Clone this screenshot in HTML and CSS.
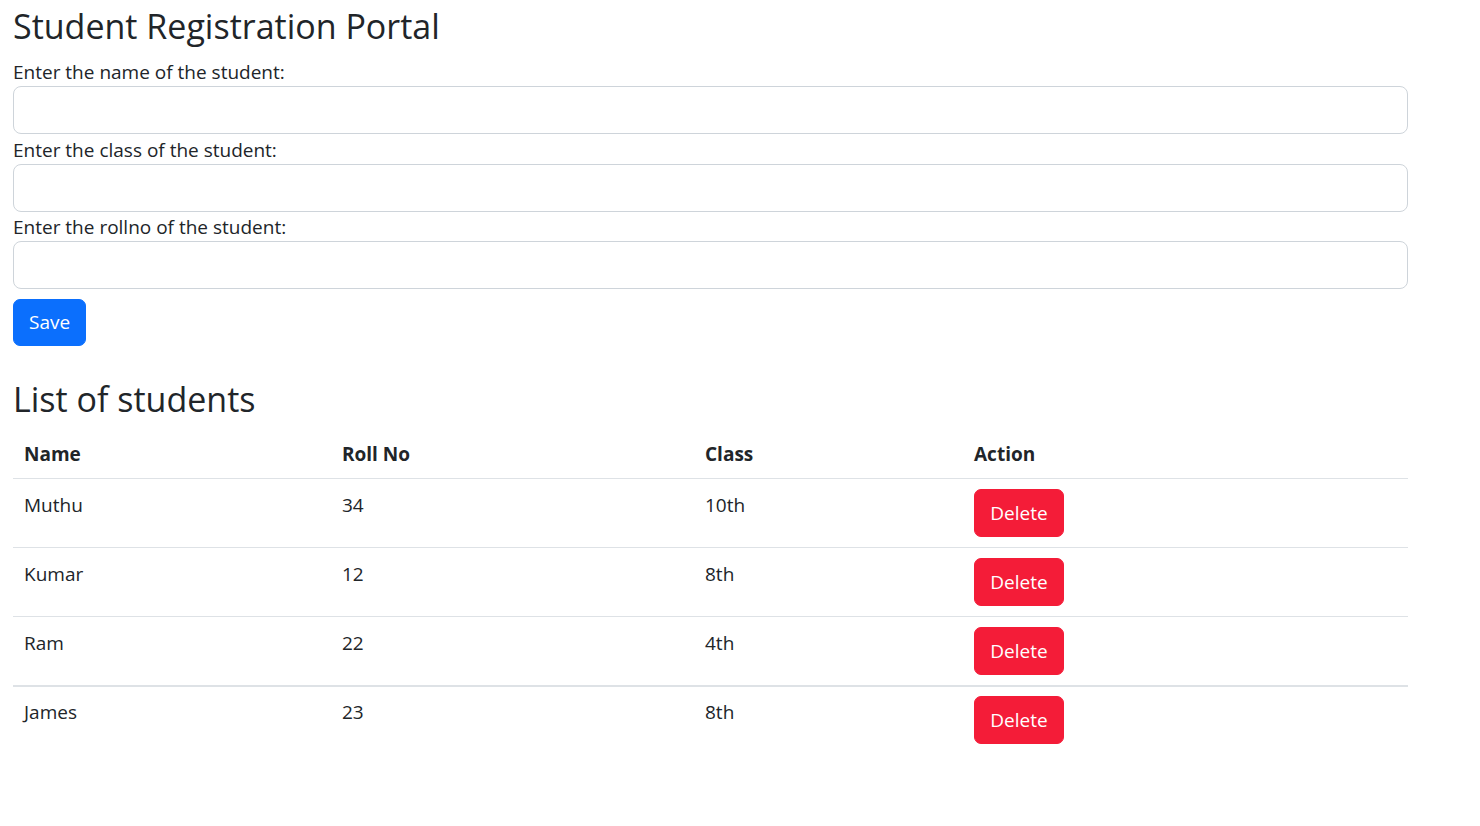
FILE: index.html
```html
<!DOCTYPE html>
<html lang="en">
<head>
<meta charset="utf-8">
<title>Student Registration Portal</title>
<link rel="stylesheet" href="styles.css">
</head>
<body>
<div class="page">
  <h1 class="title">Student Registration Portal</h1>
  <form class="form">
    <label class="label" for="name">Enter the name of the student:</label>
    <input class="input" id="name" type="text">
    <label class="label" for="cls">Enter the class of the student:</label>
    <input class="input" id="cls" type="text">
    <label class="label" for="roll">Enter the rollno of the student:</label>
    <input class="input" id="roll" type="text">
    <button class="btn btn-save" type="button">Save</button>
  </form>
  <h2 class="title title-list">List of students</h2>
  <table class="table">
    <thead>
      <tr><th class="c1">Name</th><th class="c2">Roll No</th><th class="c3">Class</th><th class="c4">Action</th></tr>
    </thead>
    <tbody>
      <tr><td>Muthu</td><td>34</td><td>10th</td><td class="act"><button class="btn btn-del" type="button">Delete</button></td></tr>
      <tr><td>Kumar</td><td>12</td><td>8th</td><td class="act"><button class="btn btn-del" type="button">Delete</button></td></tr>
      <tr class="thick"><td>Ram</td><td>22</td><td>4th</td><td class="act"><button class="btn btn-del" type="button">Delete</button></td></tr>
      <tr class="last"><td>James</td><td>23</td><td>8th</td><td class="act"><button class="btn btn-del" type="button">Delete</button></td></tr>
    </tbody>
  </table>
</div>
</body>
</html>
```
FILE: styles.css
```css
* { box-sizing: border-box; }
body {
  margin: 0;
  background: #fff;
  color: #212529;
  font-family: "Open Sans", "Noto Sans", sans-serif;
  font-size: 19px;
}
.page {
  width: 1408px;
  padding: 5px 0 0 13px;
}
.title {
  margin: 0 0 11px;
  font-size: 34px;
  line-height: 43px;
  font-weight: 500;
}
.title-list {
  margin: 32px 0 10px;
}
.form {
  display: flex;
  flex-direction: column;
  align-items: flex-start;
}
.label {
  display: block;
  line-height: 27px;
}
.input {
  display: block;
  width: 100%;
  height: 48px;
  margin: 0 0 2.5px;
  border: 1px solid #ced4da;
  border-radius: 8px;
  background: #fff;
  font: inherit;
}
.btn {
  border: 1px solid transparent;
  border-radius: 7px;
  color: #fff;
  font-family: inherit;
  font-size: 19px;
  line-height: 27px;
  padding: 0 15px;
  cursor: pointer;
}
.btn-save {
  margin-top: 7.5px;
  height: 47px;
  background: #0b6ffd;
  border-color: #0b6ffd;
}
.btn-del {
  display: block;
  width: 90px;
  height: 48px;
  padding: 0;
  background: #f41c38;
  border-color: #f41c38;
}
.table {
  width: 100%;
  border-collapse: collapse;
  table-layout: fixed;
}
.c1 { width: 318px; }
.c2 { width: 363px; }
.c3 { width: 269px; }
.c4 { width: 445px; }
.table th {
  text-align: left;
  font-weight: 700;
  line-height: 27px;
  padding: 10px 11px;
  border-bottom: 1px solid #dee2e6;
}
.table td {
  vertical-align: top;
  line-height: 27px;
  padding: 13px 11px 10px;
  border-bottom: 1px solid #dee2e6;
}
.table td.act {
  padding: 10px 11px;
}
.table tr.thick td {
  border-bottom: 2px solid #dee2e6;
}
.table tr.last td {
  border-bottom: none;
  padding-top: 12px;
}
.table tr.last td.act {
  padding-top: 9px;
}
```
